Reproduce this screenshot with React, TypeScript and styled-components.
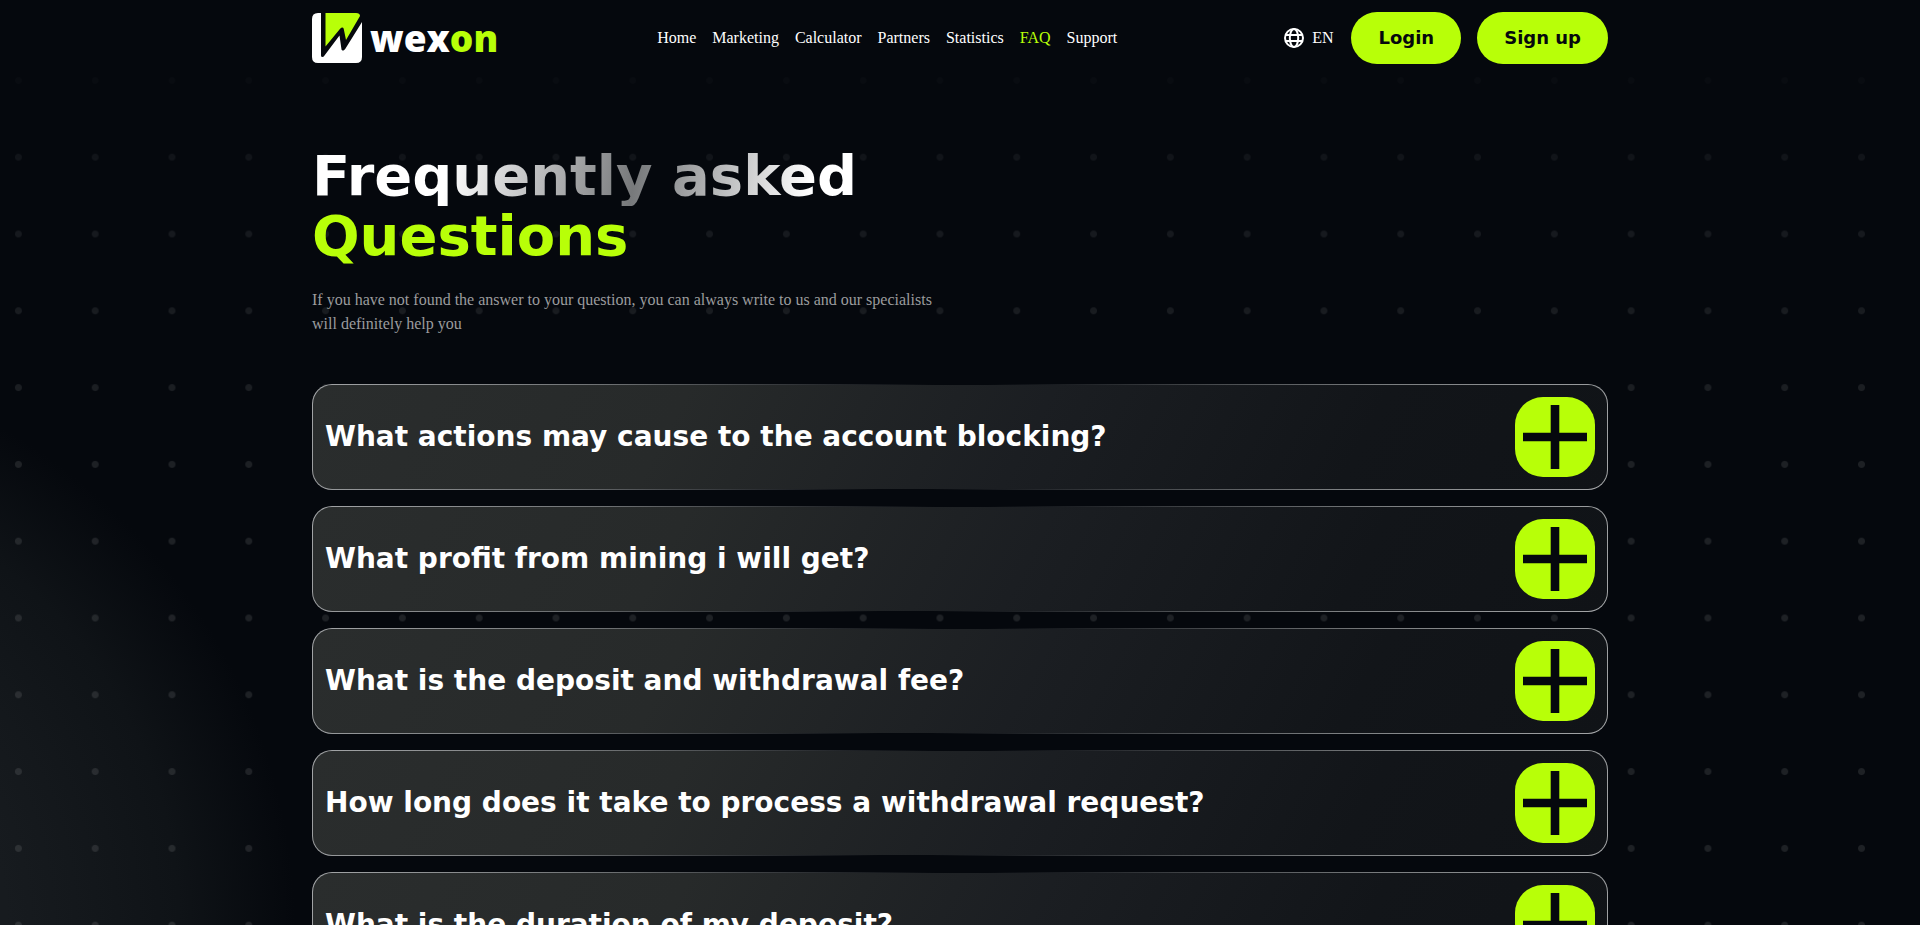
import React, { useState } from "react";
import styled, { createGlobalStyle } from "styled-components";

const LIME = "#b8ff08";
const INK = "#05080d";
const DISPLAY = '"DejaVu Sans", "Liberation Sans", sans-serif';
const BODY = '"Liberation Serif", "Times New Roman", serif';

const GlobalStyle = createGlobalStyle`
  *, *::before, *::after { box-sizing: border-box; }
  body {
    margin: 0;
    background: ${INK};
    color: #fff;
    font: 16px/24px ${BODY};
  }
  h1, h2, p, ul { margin: 0; padding: 0; }
  button { border: 0; font: inherit; cursor: pointer; }
`;

const Page = styled.div`
  position: relative;
  min-height: 100vh;
  overflow: hidden;
  background: radial-gradient(circle 577px at -282px 930px, #171b1f 50%, #14181c 62%, #0f1317 80%, ${INK} 100%);
`;

const Dots = styled.div`
  position: absolute;
  inset: 0;
  pointer-events: none;
  background: radial-gradient(circle, rgba(255, 255, 255, 0.1) 3px, transparent 4px) -20px 42px / 4vw 4vw;
  mask-image: linear-gradient(transparent 40px, rgba(0, 0, 0, 0.5) 150px, rgba(0, 0, 0, 0.7) 240px, #000 480px);
`;

const Container = styled.div`
  position: relative;
  width: 100%;
  max-width: 1320px;
  margin: 0 auto;
  padding: 0 12px;
`;

const Header = styled.header`
  display: flex;
  align-items: center;
  justify-content: space-between;
  padding: 12px 0;
`;

const Logo = styled.a`
  display: flex;
  align-items: center;
  gap: 8px;
  color: #fff;
  text-decoration: none;
`;

const LogoMark = styled.svg`
  display: block;
  width: 50px;
  height: 50px;
`;

const LogoText = styled.span`
  font: 800 37px/48px "Open Sans", sans-serif;
`;

const Accent = styled.span`
  color: ${LIME};
`;

const Nav = styled.nav`
  display: flex;
  gap: 16px;
  margin-right: 8px;
`;

const NavLink = styled.a<{ $active?: boolean }>`
  color: ${({ $active }) => ($active ? LIME : "#fff")};
  text-decoration: none;
`;

const Actions = styled.div`
  display: flex;
  align-items: center;
  gap: 16px;
`;

const Language = styled.button`
  display: flex;
  align-items: center;
  gap: 8px;
  padding: 0 2px 0 0;
  background: none;
  color: #fff;
`;

const PillButton = styled.button`
  height: 52px;
  padding: 0 27px;
  border-radius: 26px;
  background: ${LIME};
  color: ${INK};
  font: bold 18px/24px ${DISPLAY};
`;

const Intro = styled.section`
  padding: 70px 0 48px;
`;

const Title = styled.h1`
  font: bold 56px/60px ${DISPLAY};
`;

const Shine = styled.span`
  display: table;
  color: transparent;
  background: linear-gradient(100deg, #fff 25%, #77797b 59%, #fff 91%);
  background-clip: text;
`;

const Lead = styled.p`
  max-width: 648px;
  margin-top: 22px;
  color: #9b9c9e;
`;

const Questions = styled.ul`
  display: grid;
  gap: 16px;
  padding-bottom: 64px;
  list-style: none;
`;

const Card = styled.li`
  border: 1px solid transparent;
  border-radius: 20px;
  padding: 12px;
  background:
    linear-gradient(118deg, #2a2d2d 0%, #272a2a 28%, #1b1e22 55%, #121519 80%, #101317 100%) padding-box,
    linear-gradient(118deg, #a4a6a8 0%, #6d7072 22%, ${INK} 46%, ${INK} 50%, #7c7f81 80%, #a4a6a8 100%) border-box;
`;

const CardHead = styled.div`
  display: flex;
  align-items: center;
  justify-content: space-between;
  gap: 16px;
`;

const Question = styled.h2`
  font: bold 28px/32px ${DISPLAY};
`;

const Toggle = styled.button`
  display: grid;
  place-items: center;
  flex: none;
  width: 80px;
  height: 80px;
  padding: 0;
  border-radius: 28px;
  background: ${LIME};
`;

const Answer = styled.p`
  padding-top: 12px;
  color: #9b9c9e;
`;

const links = ["Home", "Marketing", "Calculator", "Partners", "Statistics", "FAQ", "Support"];

const faq = [
  "What actions may cause to the account blocking?",
  "What profit from mining i will get?",
  "What is the deposit and withdrawal fee?",
  "How long does it take to process a withdrawal request?",
  "What is the duration of my deposit?",
];

function FaqItem({ question }: { question: string }) {
  const [open, setOpen] = useState(false);
  return (
    <Card>
      <CardHead>
        <Question>{question}</Question>
        <Toggle type="button" aria-expanded={open} aria-label={question} onClick={() => setOpen(!open)}>
          <svg width="64" height="64" viewBox="0 0 64 64" fill={INK} aria-hidden="true">
            <path d="M0 27.7h64v8.6H0z" />
            {!open && <path d="M27.7 0h8.6v64h-8.6z" />}
          </svg>
        </Toggle>
      </CardHead>
      {open && <Answer>Our specialists will help you with this question.</Answer>}
    </Card>
  );
}

export default function App() {
  return (
    <Page>
      <GlobalStyle />
      <Dots />
      <Container>
        <Header>
          <Logo href="#home">
            <LogoMark viewBox="0 0 50 50" aria-hidden="true">
              <path fill="#fff" d="M6 0H9V42.5Q9 44 10.5 44Q11.5 44 12.3 42.8L27.5 22.5L29.5 36.5Q30 38 31.5 37.4Q32.6 37 33.2 36L50 9V44Q50 50 44 50H6Q0 50 0 44V6Q0 0 6 0Z" />
              <path fill={LIME} d="M13.5 0H44Q48 0 48 3L34 27L31.7 15.8Q31 14 29.3 14.8Q28.4 15.2 27.5 16.5L13.5 33.5Z" />
            </LogoMark>
            <LogoText>wex<Accent>on</Accent></LogoText>
          </Logo>
          <Nav>
            {links.map((label) => (
              <NavLink key={label} href={`#${label.toLowerCase()}`} $active={label === "FAQ"}>{label}</NavLink>
            ))}
          </Nav>
          <Actions>
            <Language type="button">
              <svg width="20" height="20" viewBox="0 0 20 20" fill="none" stroke="#fff" strokeWidth="2" aria-hidden="true">
                <circle cx="10" cy="10" r="9" />
                <ellipse cx="10" cy="10" rx="4.2" ry="9" />
                <path d="M1.5 7h17M1.5 13h17" />
              </svg>
              EN
            </Language>
            <PillButton type="button">Login</PillButton>
            <PillButton type="button">Sign up</PillButton>
          </Actions>
        </Header>
        <main>
          <Intro>
            <Title>
              <Shine>Frequently asked</Shine>
              <Accent>Questions</Accent>
            </Title>
            <Lead>
              If you have not found the answer to your question, you can always write to us and our specialists will
              definitely help you
            </Lead>
          </Intro>
          <Questions>
            {faq.map((question) => (
              <FaqItem key={question} question={question} />
            ))}
          </Questions>
        </main>
      </Container>
    </Page>
  );
}
